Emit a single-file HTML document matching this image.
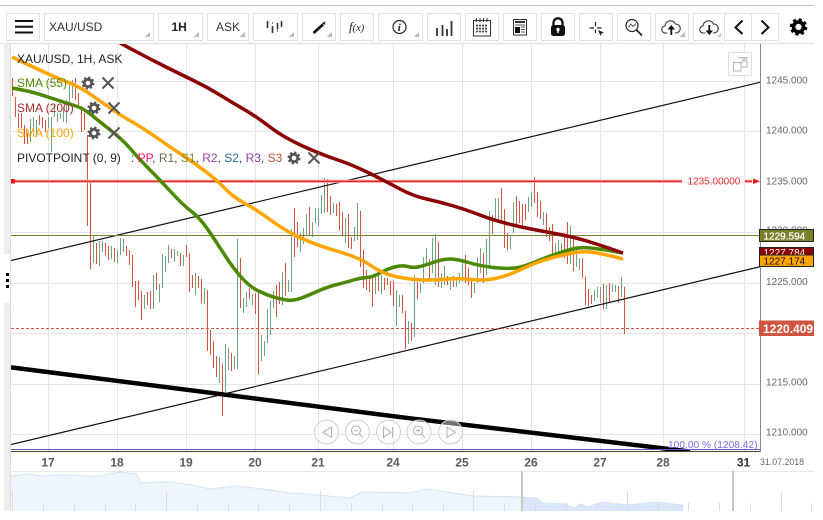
<!DOCTYPE html>
<html><head><meta charset="utf-8"><style>
html,body{margin:0;padding:0;background:#fff;width:823px;height:520px;overflow:hidden}
svg{display:block;font-family:"Liberation Sans",sans-serif}
</style></head><body>
<svg width="823" height="520" viewBox="0 0 823 520" xmlns="http://www.w3.org/2000/svg">
<defs>
<g id="gear"><circle r="3.7" fill="none" stroke="currentColor" stroke-width="2.8"/><circle r="5.2" fill="none" stroke="currentColor" stroke-width="2.6" stroke-dasharray="2.1 1.98"/></g>
<g id="x"><path d="M-5.5-5.5L5.5 5.5M5.5-5.5L-5.5 5.5" stroke="currentColor" stroke-width="2" fill="none"/></g>
<clipPath id="cc"><rect x="11" y="44" width="749" height="407"/></clipPath>
</defs>
<rect x="0" y="5" width="814" height="1" fill="#c8c8c8"/>
<!-- toolbar -->
<g fill="#fff" stroke="#e2e2e2">
<rect x="6.5" y="13.5" width="33" height="27"/><rect x="44.5" y="13.5" width="109" height="27"/><rect x="158.5" y="13.5" width="44" height="27"/><rect x="207.5" y="13.5" width="41" height="27"/><rect x="253.5" y="13.5" width="44" height="27"/><rect x="302.5" y="13.5" width="33" height="27"/><rect x="340.5" y="13.5" width="33" height="27"/><rect x="378.5" y="13.5" width="44" height="27"/><rect x="427.5" y="13.5" width="33" height="27"/><rect x="465.5" y="13.5" width="33" height="27"/><rect x="503.5" y="13.5" width="33" height="27"/><rect x="541.5" y="13.5" width="33" height="27"/><rect x="579.5" y="13.5" width="33" height="27"/><rect x="617.5" y="13.5" width="33" height="27"/><rect x="655.5" y="13.5" width="33" height="27"/>
<path d="M721 13.5H693.5V40.5H721" fill="#fff"/><rect x="724.5" y="13.5" width="54" height="27"/><path d="M751.5 13.5V40.5" fill="none"/>
</g>
<g fill="#bdbdbd"><path d="M150 32V37H144.500z"/><path d="M199 32V37H193.500z"/><path d="M245 32V37H239.500z"/><path d="M294 32V37H288.500z"/><path d="M332 32V37H326.500z"/><path d="M419 32V37H413.500z"/><path d="M685 32V37H679.500z"/><path d="M721 33V37H717z"/></g>
<path d="M15 21H33M15 26.800H33M15 32.500H33" stroke="#111" stroke-width="2" fill="none"/>
<text x="49" y="31" font-size="12" fill="#333">XAU/USD</text>
<text x="171.500" y="31" font-size="12" font-weight="bold" fill="#222">1H</text>
<text x="216" y="31" font-size="12" fill="#333">ASK</text>
<path d="M267.500 21V28M272.500 26V33M277.500 23V29M281.500 21V27" stroke="#333" stroke-width="1.600"/>
<path d="M272.500 22V24M277.500 29V32" stroke="#777"/>
<path d="M313.500 33L323 24.500" stroke="#111" stroke-width="2.800"/><path d="M322 23L325.500 21.500L324.500 25z" fill="#111"/>
<text x="349" y="31" font-size="13" font-family="'Liberation Serif',serif" font-style="italic" fill="#222">f<tspan font-size="10.500">(x)</tspan></text>
<circle cx="399.500" cy="27" r="6.500" fill="none" stroke="#222" stroke-width="1.200"/><text x="397.800" y="31" font-size="11" font-family="'Liberation Serif',serif" font-style="italic" font-weight="bold" fill="#222">i</text>
<path d="M437 36V28M442.500 36V25M447 36V29M451.500 36V21" stroke="#333" stroke-width="1.800"/>
<g fill="none" stroke="#333"><rect x="473.500" y="20.500" width="17" height="15.500"/><path d="M476.500 18V22M480 18V22M483.500 18V22M487 18V22" /></g>
<path d="M476 25.500H488M476 28.500H488M476 31.500H488" stroke="#444" stroke-width="1.800" stroke-dasharray="2 1" fill="none"/>
<g fill="none" stroke="#333"><rect x="513.500" y="19.500" width="13" height="15.500"/><path d="M515 22H525" stroke-width="2"/><path d="M521 27H525M521 29.500H525M521 32H525M515 25H525" stroke="#555"/></g><rect x="515" y="27" width="5" height="6" fill="#111"/>
<path d="M553.500 26V22.800a4.500 4.500 0 0 1 9 0V26" fill="none" stroke="#111" stroke-width="2.300"/><rect x="551" y="25" width="14" height="11" rx="2.500" fill="#111"/><circle cx="558" cy="29.500" r="1.700" fill="#fff"/><rect x="557.300" y="30" width="1.400" height="3" fill="#fff"/>
<path d="M589.500 28H594M597 28H601.500M595.500 22V26.500M595.500 29.500V33" stroke="#222" stroke-width="1.200"/><path d="M598 30L604 32.500L601.500 33.500L600.500 36z" fill="#222"/>
<circle cx="632" cy="25.500" r="6" fill="none" stroke="#222" stroke-width="1.200"/><path d="M628.500 27L631 24L633 26.500L636 23.500" fill="none" stroke="#555"/><path d="M636.500 30L642 35.500" stroke="#222" stroke-width="1.800"/>
<path d="M667.500 33H665.500a3.500 3.500 0 0 1-.5-7a5.500 5.500 0 0 1 10.500-2a4.500 4.500 0 0 1 .5 9H675" fill="none" stroke="#333" stroke-width="1.100"/><path d="M671.300 35V28.500" stroke="#111" stroke-width="1.800"/><path d="M667.500 29.500L671.300 25L675 29.500z" fill="#111"/>
<path d="M705.500 33H703.500a3.500 3.500 0 0 1-.5-7a5.500 5.500 0 0 1 10.500-2a4.500 4.500 0 0 1 .5 9H713" fill="none" stroke="#333" stroke-width="1.100"/><path d="M709.300 25V31" stroke="#111" stroke-width="1.800"/><path d="M705.500 30.500L709.300 35L713 30.500z" fill="#111"/>
<path d="M742.500 20.500L735.500 27.500L742.500 34M761.500 20.500L768.500 27.500L761.500 34" fill="none" stroke="#111" stroke-width="2"/>
<use href="#gear" transform="translate(798.500 27) scale(1.350)" color="#000"/>
<rect x="0" y="43" width="814" height="1" fill="#e0e0e0"/>
<!-- left strip -->
<rect x="4" y="44" width="6" height="467" fill="#eeeeee"/><rect x="10" y="44" width="1" height="467" fill="#dcdcdc"/>
<rect x="4" y="253" width="6" height="51" fill="#fff"/><path d="M4 253H10M4 304H10" stroke="#ddd"/>
<rect x="6" y="273" width="3" height="3" fill="#000"/><rect x="6" y="279" width="3" height="3" fill="#000"/><rect x="6" y="285" width="3" height="3" fill="#000"/>
<!-- grid -->
<g stroke="#e4e4e4" shape-rendering="crispEdges">
<path d="M48.500 44V451M117.500 44V451M186.500 44V451M255.500 44V451M318.500 44V451M393.500 44V451M462.500 44V451M531.500 44V451M600.500 44V451M663.500 44V451M744.500 44V451"/>
<path d="M11 81.500H760M11 131.500H760M11 182.500H760M11 232.500H760M11 283.500H760M11 333.500H760M11 384.500H760M11 434.500H760"/>
</g>
<g clip-path="url(#cc)">
<!-- bars -->
<path shape-rendering="crispEdges" fill="none" stroke="#d9513f" d="M12.500 78V96M15.500 97V117M18.500 113V128M21.500 113V128M24.500 125V144M27.500 133V144M39.500 115V125M42.500 117V128M45.500 120V132M75.500 78V100M78.500 93V105M81.500 106V132M84.500 113V130M87.500 135V226M90.500 180V269M96.500 243V264M105.500 243V255M108.500 246V260M114.500 248V262M126.500 246V256M129.500 250V265M132.500 255V287M135.500 281V307M138.500 281V300M141.500 291V320M147.500 292V305M150.500 291V309M156.500 273V290M171.500 249V258M180.500 253V266M186.500 245V257M189.500 253V292M192.500 275V288M198.500 276V288M201.500 279V303M207.500 290V351M210.500 330V355M213.500 341V368M216.500 356V377M222.500 364V416M231.500 353V371M240.500 258V308M249.500 288V299M255.500 293V314M258.500 292V374M276.500 285V317M279.500 282V304M285.500 263V296M294.500 208V257M297.500 222V247M309.500 207V236M327.500 179V212M330.500 196V215M336.500 204V216M339.500 202V230M342.500 212V235M348.500 214V248M351.500 237V249M360.500 211V267M363.500 250V288M366.500 270V290M369.500 277V292M372.500 277V307M378.500 275V291M384.500 278V290M387.500 278V285M390.500 281V295M393.500 281V306M402.500 295V313M405.500 311V349M411.500 323V341M417.500 282V299M429.500 259V282M438.500 242V287M447.500 276V285M453.500 276V287M465.500 255V283M468.500 268V285M471.500 278V298M483.500 253V283M492.500 215V234M501.500 188V220M504.500 209V248M507.500 233V250M516.500 196V226M519.500 201V223M522.500 204V228M525.500 204V220M534.500 177V203M537.500 192V217M540.500 201V219M546.500 213V237M549.500 227V241M552.500 224V255M564.500 233V258M567.500 222V264M573.500 236V271M582.500 258V278M585.500 277V305M588.500 289V306M591.500 295V304M603.500 284V309M609.500 283V302M618.500 286V303M624.500 287V334"/>
<path shape-rendering="crispEdges" fill="none" stroke="#6ea482" d="M30.500 119V142M33.500 117V133M36.500 120V137M48.500 117V128M51.500 117V152M54.500 104V117M57.500 113V122M60.500 113V119M63.500 108V122M66.500 100V123M69.500 82V102M72.500 80V98M93.500 236V263M99.500 241V266M102.500 241V252M111.500 246V259M117.500 250V263M120.500 238V255M123.500 239V252M144.500 295V309M153.500 275V309M159.500 284V302M162.500 254V288M165.500 256V272M168.500 245V263M174.500 249V262M177.500 251V256M183.500 255V266M195.500 273V295M204.500 288V304M219.500 357V383M225.500 344V392M228.500 348V370M234.500 356V369M237.500 239V369M243.500 298V313M246.500 292V307M252.500 294V305M261.500 335V361M264.500 341V356M267.500 309V343M270.500 301V335M273.500 291V308M282.500 272V305M288.500 280V292M291.500 229V292M300.500 233V252M303.500 228V244M306.500 214V236M312.500 222V237M315.500 208V223M318.500 208V226M321.500 195V214M324.500 178V213M333.500 203V213M345.500 218V243M354.500 227V241M357.500 203V240M375.500 277V294M381.500 275V294M396.500 290V326M399.500 295V307M408.500 321V344M414.500 275V337M420.500 283V293M423.500 257V283M426.500 248V265M432.500 238V273M435.500 234V285M441.500 273V288M444.500 266V285M450.500 280V290M456.500 280V287M459.500 273V283M462.500 260V282M474.500 283V293M477.500 257V283M480.500 248V273M486.500 239V275M489.500 211V266M495.500 198V220M498.500 198V220M510.500 235V249M513.500 202V233M528.500 197V212M531.500 192V207M543.500 212V225M555.500 243V254M558.500 240V257M561.500 243V256M570.500 226V264M576.500 250V267M579.500 258V270M594.500 290V301M597.500 287V298M600.500 287V303M606.500 285V309M612.500 284V292M615.500 285V292M621.500 277V297"/>
<!-- lines -->
<path d="M11 260.500L760 82.300M11 444.500L760 266.700" stroke="#111" stroke-width="1.200" fill="none"/>
<path d="M11 367.300L410 418.300L690 451.500" stroke="#000" stroke-width="4.500" fill="none"/>
<path d="M11 181.300H682M745 181.300H752" stroke="#ffa8a8" stroke-width="3" fill="none"/>
<path d="M11 181.300H682M745 181.300H752" stroke="#ee2222" stroke-width="1.300" fill="none"/>
<path d="M760 181.300L753 178.500V184z" fill="#ee1111"/><rect x="11" y="179" width="4" height="4.500" fill="#ff1111"/>
<path d="M11 235.500H760" stroke="#7a8028" fill="none"/>
<path d="M11 328.500H760" stroke="#d9513f" stroke-dasharray="3 2" fill="none"/>
<!-- SMAs -->
<path d="M12 88L22.500 90Q33 92 48 97Q63 102 73 105Q83 108 91.500 115Q100 122 111.500 131Q123 140 131.500 150Q140 160 150 170Q160 180 171.500 192.500Q183 205 191.500 211.500Q200 218 208.500 230.500Q217 243 225 255.500Q233 268 241.500 277.500Q250 287 258.500 291Q267 295 273.500 297Q280 299 286.500 300Q293 301 300 298.500Q307 296 317 291.500Q327 287 337 284.500Q347 282 353.500 280Q360 278 366.500 277.500Q373 277 380 273Q387 269 394.500 267Q402 265 407.500 266.500Q413 268 418 267Q423 266 433 262.500Q443 259 450 259Q457 259 468.500 262.500Q480 266 493.500 267.500Q507 269 515 268Q523 267 535 262Q547 257 556 254Q565 251 572.500 249Q580 247 590 248Q600 249 611.500 251L623 253" fill="none" stroke="#4b8a00" stroke-width="3.500" stroke-linejoin="round"/>
<path d="M120 43L135 51Q150 59 165 66.500Q180 74 193.500 80.500Q207 87 220 95Q233 103 245 110Q257 117 270 127Q283 137 301.500 145.500Q320 154 336.500 159.500Q353 165 370 173.500Q387 182 400 189Q413 196 426.500 199Q440 202 453.500 206Q467 210 478.500 214.500Q490 219 505 223Q520 227 535 229.750Q550 232.500 563.500 235.250Q577 238 588.500 241.500Q600 245 623 253" fill="none" stroke="#8b0000" stroke-width="3.500" stroke-linejoin="round"/>
<path d="M12 57L22.500 62Q33 67 45 72.500Q57 78 68.500 82.500Q80 87 91.500 95Q103 103 111.500 109Q120 115 131.500 121.500Q143 128 156.500 137.500Q170 147 180 153.500Q190 160 203.500 170Q217 180 225 188.500Q233 197 245 203.500Q257 210 268.500 218.500Q280 227 290 232.500Q300 238 311.500 242.500Q323 247 341.500 252.500Q360 258 371.500 266Q383 274 398 277Q413 280 425 280Q437 280 448.500 279Q460 278 471.500 279.500Q483 281 495 278.500Q507 276 518.500 270.500Q530 265 540 261.500Q550 258 565 254.500Q580 251 590 252Q600 253 623 259" fill="none" stroke="#ffa500" stroke-width="3.500" stroke-linejoin="round"/>
</g>
<path d="M11 449.500H760" stroke="#5a50c8" fill="none"/><path d="M11 451.500H760" stroke="#444" fill="none"/>
<rect x="760" y="44" width="1" height="408" fill="#888"/>
<text x="687.500" y="184.500" font-size="10" fill="#ee2f2f">1235.00000</text>
<text x="668" y="448" font-size="10.200" fill="#7b68ee">100.00 % (1208.42)</text>
<!-- legend -->
<g font-size="12">
<text x="17" y="63" fill="#222">XAU/USD, 1H, ASK</text>
<text x="17" y="87" fill="#4b8a00">SMA (55)</text>
<text x="17" y="112" fill="#a52a2a">SMA (200)</text>
<text x="17" y="137" fill="#ffa500">SMA (100)</text>
<text x="17" y="162" fill="#222">PIVOTPOINT (0, 9)</text>
<text x="131" y="162" fill="#444">: <tspan fill="#f0146e">PP</tspan>, <tspan fill="#666a55">R1</tspan>, <tspan fill="#808a20">S1</tspan>, <tspan fill="#8e44ad">R2</tspan>, <tspan fill="#2a6a8e">S2</tspan>, <tspan fill="#8e44ad">R3</tspan>, <tspan fill="#c0503f">S3</tspan></text>
</g>
<g color="#555">
<use href="#gear" transform="translate(88 83)"/><use href="#x" transform="translate(108 83)"/>
<use href="#gear" transform="translate(94 108)"/><use href="#x" transform="translate(114 108)"/>
<use href="#gear" transform="translate(94 133)"/><use href="#x" transform="translate(114 133)"/>
<use href="#gear" transform="translate(294 158)"/><use href="#x" transform="translate(314 158)"/>
</g>
<!-- popout -->
<rect x="728.500" y="52.500" width="23" height="23" fill="#fff" stroke="#dedede"/>
<path d="M738 57.500H747V67H741.500M733.500 62.500H741V71H733.500zM740 64L745 59M741.500 59H745V62.500" fill="none" stroke="#b5b5b5"/>
<!-- nav circles -->
<g fill="#fff" fill-opacity=".45" stroke="#cfcfcf"><circle cx="326.500" cy="432" r="12"/><circle cx="357.500" cy="432" r="12"/><circle cx="388.500" cy="432" r="12"/><circle cx="419" cy="432" r="12"/><circle cx="450.500" cy="432" r="12"/></g>
<g fill="none" stroke="#b0b0b0"><path d="M331.500 427V437.500L323 432.300z"/><circle cx="356" cy="430.500" r="4.500"/><path d="M354 430.500H358M359.500 434L363 437.500"/><path d="M383.500 427V437.500L391 432.300zM392.500 427V437.500" /><circle cx="418" cy="430.500" r="4.500"/><path d="M416 430.500H420M418 428.500V432.500M421.500 434L425 437.500"/><path d="M447 427V437.500L455.500 432.300z"/></g>
<!-- axis -->
<g font-size="10" fill="#666">
<text x="766" y="83.500">1245.000</text><text x="766" y="133.500">1240.000</text><text x="766" y="184.500">1235.000</text><text x="766" y="233.500">1230.000</text><text x="766" y="285">1225.000</text><text x="766" y="385.500">1215.000</text><text x="766" y="435.500">1210.000</text>
</g>
<rect x="759.500" y="229.500" width="54" height="12" fill="#7a8028" stroke="#222"/><text x="763.500" y="239.300" font-size="10" fill="#fff" stroke="#fff" stroke-width=".25">1229.594</text>
<rect x="759.500" y="247.500" width="54" height="9" fill="#8b0000" stroke="#222"/><text x="763.500" y="256" font-size="10" fill="#fff">1227.784</text>
<rect x="759.500" y="255" width="54" height="11.500" fill="#ffa500" stroke="#222"/><text x="763.500" y="264.300" font-size="10" fill="#111">1227.174</text>
<rect x="759" y="320.500" width="55" height="15.500" fill="#cf5540"/><text x="763" y="332.800" font-size="12" font-weight="bold" fill="#fff">1220.409</text>
<!-- date axis -->
<g font-size="12" font-weight="bold" fill="#5a5a5a" text-anchor="middle">
<text x="48" y="466.500">17</text><text x="117" y="466.500">18</text><text x="186" y="466.500">19</text><text x="255" y="466.500">20</text><text x="318" y="466.500">21</text><text x="393" y="466.500">24</text><text x="462" y="466.500">25</text><text x="531" y="466.500">26</text><text x="600" y="466.500">27</text><text x="663" y="466.500">28</text><text x="743.500" y="466.500" fill="#333">31</text>
</g>
<text x="760" y="465" font-size="8.800" fill="#666">31.07.2018</text>
<!-- navigator -->
<rect x="11" y="471" width="803" height="1" fill="#e8e8e8"/>
<path d="M11 476L27 474L43 476L57 475L70 475L87 476L100 476L120 472L137 474L140 483L167 482L193 485L210 489L237 486L263 489L290 493L317 495L350 498L363 492L410 493L427 489L453 493L473 496L520 497L522 497V511H11z" fill="#eef5fd"/>
<path d="M522 497L537 498L542 503L565 504L575 508L580 504L587 507L603 502L627 505L657 502L673 504L683 505V511H522z" fill="#d9e7f9"/>
<path d="M11 476L27 474L43 476L57 475L70 475L87 476L100 476L120 472L137 474L140 483L167 482L193 485L210 489L237 486L263 489L290 493L317 495L350 498L363 492L410 493L427 489L453 493L473 496L520 497L537 498L542 503L565 504L575 508L580 504L587 507L603 502L627 505L657 502L673 504L683 505" fill="none" stroke="#d3e3f6"/>
<g stroke="#dcdcdc" shape-rendering="crispEdges"><path d="M12.500 491V511M166.500 491V511M320.500 491V511M473.500 491V511M627.500 491V511M781.500 491V511M43.500 503V511M74.500 503V511M105.500 503V511M135.500 503V511M197.500 503V511M228.500 503V511M258.500 503V511M289.500 503V511M351.500 503V511M382.500 503V511M412.500 503V511M443.500 503V511M504.500 503V511M535.500 503V511M566.500 503V511M597.500 503V511M658.500 503V511M688.500 503V511M719.500 503V511M750.500 503V511M811.500 503V511"/></g>
<rect x="521" y="471" width="2" height="40" fill="#c6c6c6"/><rect x="732" y="471" width="2" height="40" fill="#c6c6c6"/>
</svg>
</body></html>
